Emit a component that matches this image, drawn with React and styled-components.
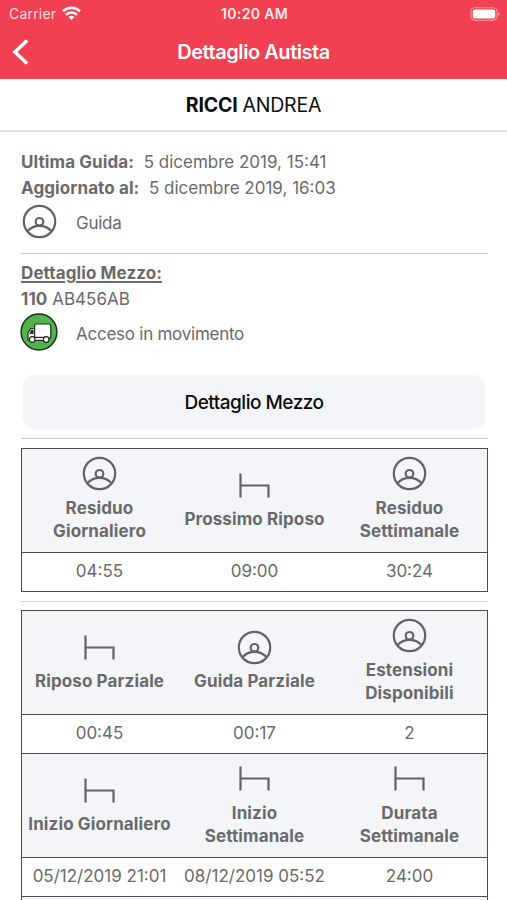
import styled, { createGlobalStyle } from 'styled-components'

const GlobalStyle = createGlobalStyle`
  * {
    box-sizing: border-box;
  }

  html,
  body,
  #root {
    height: 100%;
  }

  body {
    margin: 0;
    overflow: hidden;
    background-color: #ffffff;
    color: #6a6a6c;
    font-family: Inter, 'Liberation Sans', sans-serif;
    font-size: 17px;
  }
`

const Screen = styled.div`
  height: 100%;
  overflow: hidden;
`

const Header = styled.header`
  height: 79px;
  background-color: #f04052;
  color: #ffffff;
`

const StatusBar = styled.div`
  height: 27px;
  padding: 0 7px 0 9px;
  display: grid;
  grid-template-columns: 1fr auto 1fr;
  align-items: center;
  font-size: 14px;
`

const Carrier = styled.div`
  display: flex;
  align-items: center;
  gap: 6px;
  color: #ffdfe2;
  letter-spacing: 0.2px;
`

const Clock = styled.div`
  font-weight: 600;
  font-size: 14px;
  color: #ffe9eb;
  letter-spacing: 0.35px;
`

const Battery = styled.svg`
  justify-self: end;
`

const NavBar = styled.div`
  height: 50px;
  padding: 0 12px;
  display: grid;
  grid-template-columns: 1fr auto 1fr;
  align-items: center;
`

const BackButton = styled.button`
  padding: 0;
  border: 0;
  display: flex;
  background: none;
  color: inherit;
`

const Title = styled.h1`
  margin: 0;
  font-size: 20px;
  font-weight: 600;
  letter-spacing: -0.45px;
`

const Driver = styled.div`
  height: 53px;
  padding-top: 1px;
  display: flex;
  justify-content: center;
  align-items: center;
  gap: 5px;
  border-bottom: 2px solid #dedee0;
  color: #0c0c0c;
  font-size: 19.5px;
  letter-spacing: -0.2px;
`

const Content = styled.main`
  padding: 18px 19px 0 21px;
`

const Section = styled.section`
  height: ${({ $height }) => $height}px;
  padding-top: ${({ $top }) => $top || 0}px;
  border-bottom: 1px solid #c8c8ca;
`

const Line = styled.p`
  margin: 0;
  line-height: 25.7px;
  white-space: pre;

  b {
    font-size: 17px;
    font-weight: 650;
    letter-spacing: 0.1px;
  }
`

const SectionTitle = styled.b`
  text-decoration: underline;
  text-decoration-thickness: 1.5px;
  text-underline-offset: 2px;
`

const Status = styled.div`
  height: 38px;
  display: flex;
  align-items: center;
  gap: 18px;
  margin-top: ${({ $offset }) => $offset}px;
  letter-spacing: -0.25px;
`

const StatusText = styled.span`
  padding-top: 4px;
`

const IconSlot = styled.div`
  width: 38px;
  margin-left: -1px;
  display: flex;
  justify-content: center;
`

const Button = styled.button`
  display: block;
  width: 462px;
  height: 54px;
  margin: 24px 0 0 2px;
  padding-top: 1px;
  border: 0;
  border-radius: 11px;
  background-color: #f3f5f9;
  color: #0c0c0c;
  font-family: inherit;
  font-size: 19px;
  font-weight: 500;
  letter-spacing: -0.5px;
`

const Table = styled.div`
  width: 467px;
  margin: ${({ $top }) => $top}px 0 9px;
  border: 1.5px solid #4c4c4e;
  border-bottom-width: 0;
`

const Row = styled.div`
  height: ${({ $head }) => ($head ? 104 : 39)}px;
  padding-bottom: 3px;
  display: grid;
  grid-template-columns: repeat(3, 1fr);
  align-items: center;
  border-bottom: 1.5px solid #4c4c4e;
  background-color: ${({ $head }) => ($head ? '#f3f5f9' : '#ffffff')};
  text-align: center;
`

const HeadCell = styled.div`
  display: flex;
  flex-direction: column;
  align-items: center;
  gap: 5px;
  font-size: 17px;
  font-weight: 650;
  letter-spacing: 0.12px;
  line-height: 23px;
  white-space: pre-line;
`

const IconBox = styled.div`
  height: 36px;
  display: flex;
  align-items: center;
`

const Divider = styled.hr`
  margin: 0;
  border: 0;
  border-top: 1px solid #d4d4d6;
`

const Driving = () => (
  <svg width="35" height="35" viewBox="0 0 35 35" fill="none" stroke="#636365" strokeWidth="2.2">
    <circle cx="17.5" cy="17.5" r="15.7" />
    <circle cx="17.5" cy="17.8" r="3.8" />
    <path d="M5.6 27C12 20.2 23 20.2 29.4 27" />
  </svg>
)

const Bed = () => (
  <svg width="31" height="25" viewBox="0 0 31 25" fill="none" stroke="#636365" strokeWidth="2.2">
    <path d="M1.5 0.5V24.5M1.5 12.5H29.5V24.5" />
  </svg>
)

const Truck = () => (
  <svg width="38" height="38" viewBox="0 0 38 38" stroke="#222c22" strokeWidth="1.2">
    <circle cx="19" cy="19" r="17.9" fill="#4fb548" strokeWidth="1.5" />
    <path d="M15 15.5H10.5L8 20V27H15Z" fill="#ffffff" />
    <path d="M13.3 17H11.2L9.7 20.8H13.3Z" fill="#222c22" strokeWidth="0.5" />
    <rect x="14.6" y="11" width="16.2" height="14.5" rx="2" fill="#ffffff" />
    <rect x="12" y="24.4" width="15" height="3" fill="#ffffff" />
    <circle cx="12.2" cy="26.5" r="2.8" fill="#ffffff" />
    <circle cx="26.2" cy="26.5" r="2.8" fill="#ffffff" />
  </svg>
)

const Wifi = () => (
  <svg width="19" height="15" viewBox="0 0 19 15" fill="none" stroke="#ffffff" strokeWidth="2.6">
    <path d="M1 5.2C5.8 0.6 13.2 0.6 18 5.2" />
    <path d="M4 8.7C7.2 5.8 11.8 5.8 15 8.7" />
    <path d="M9.5 14L6.5 11.1Q9.5 8.6 12.5 11.1Z" fill="#ffffff" stroke="none" />
  </svg>
)

const icons = { driving: Driving, bed: Bed }

const remaining = [
  {
    heads: [
      ['driving', 'Residuo\nGiornaliero'],
      ['bed', 'Prossimo Riposo'],
      ['driving', 'Residuo\nSettimanale'],
    ],
    values: ['04:55', '09:00', '30:24'],
  },
]

const details = [
  {
    heads: [
      ['bed', 'Riposo Parziale'],
      ['driving', 'Guida Parziale'],
      ['driving', 'Estensioni\nDisponibili'],
    ],
    values: ['00:45', '00:17', '2'],
  },
  {
    heads: [
      ['bed', 'Inizio Giornaliero'],
      ['bed', 'Inizio\nSettimanale'],
      ['bed', 'Durata\nSettimanale'],
    ],
    values: ['05/12/2019 21:01', '08/12/2019 05:52', '24:00'],
  },
]

function Group({ heads, values }) {
  return (
    <>
      <Row $head>
        {heads.map(([icon, label]) => {
          const Icon = icons[icon]
          return (
            <HeadCell key={label}>
              <IconBox>
                <Icon />
              </IconBox>
              {label}
            </HeadCell>
          )
        })}
      </Row>
      <Row>
        {values.map((value) => (
          <span key={value}>{value}</span>
        ))}
      </Row>
    </>
  )
}

export default function App() {
  return (
    <Screen>
      <GlobalStyle />
      <Header>
        <StatusBar>
          <Carrier>
            Carrier
            <Wifi />
          </Carrier>
          <Clock>10:20 AM</Clock>
          <Battery width="30" height="14" viewBox="0 0 30 14">
            <rect x="1" y="0.7" width="26" height="12.6" rx="3.8" fill="none" stroke="#f8a0a9" />
            <rect x="2.8" y="2.4" width="22.4" height="9.2" rx="2.2" fill="#ffffff" />
            <path d="M28.3 5V9Q29.6 8.4 29.6 7T28.3 5Z" fill="#f8a0a9" />
          </Battery>
        </StatusBar>
        <NavBar>
          <BackButton aria-label="Indietro">
            <svg width="17" height="26" viewBox="0 0 17 26" fill="none" stroke="#ffffff" strokeWidth="3.6">
              <path d="M14 2.5L3 13L14 23.5" strokeLinecap="round" />
            </svg>
          </BackButton>
          <Title>Dettaglio Autista</Title>
        </NavBar>
      </Header>
      <Driver>
        <b>RICCI</b>
        <span>ANDREA</span>
      </Driver>
      <Content>
        <Section $height={104}>
          <Line>
            <b>Ultima Guida:</b>
            {'  5 dicembre 2019, 15:41'}
          </Line>
          <Line>
            <b>Aggiornato al:</b>
            {'  5 dicembre 2019, 16:03'}
          </Line>
          <Status $offset={1}>
            <IconSlot>
              <Driving />
            </IconSlot>
            <StatusText>Guida</StatusText>
          </Status>
        </Section>
        <Section $height={185} $top={7}>
          <Line>
            <SectionTitle>Dettaglio Mezzo:</SectionTitle>
          </Line>
          <Line>
            <b>110</b> AB456AB
          </Line>
          <Status $offset={1}>
            <IconSlot>
              <Truck />
            </IconSlot>
            <StatusText>Acceso in movimento</StatusText>
          </Status>
          <Button>Dettaglio Mezzo</Button>
        </Section>
        <Table $top={9}>
          {remaining.map((group, i) => (
            <Group key={i} {...group} />
          ))}
        </Table>
        <Divider />
        <Table $top={8}>
          {details.map((group, i) => (
            <Group key={i} {...group} />
          ))}
          <Row $head />
        </Table>
      </Content>
    </Screen>
  )
}
